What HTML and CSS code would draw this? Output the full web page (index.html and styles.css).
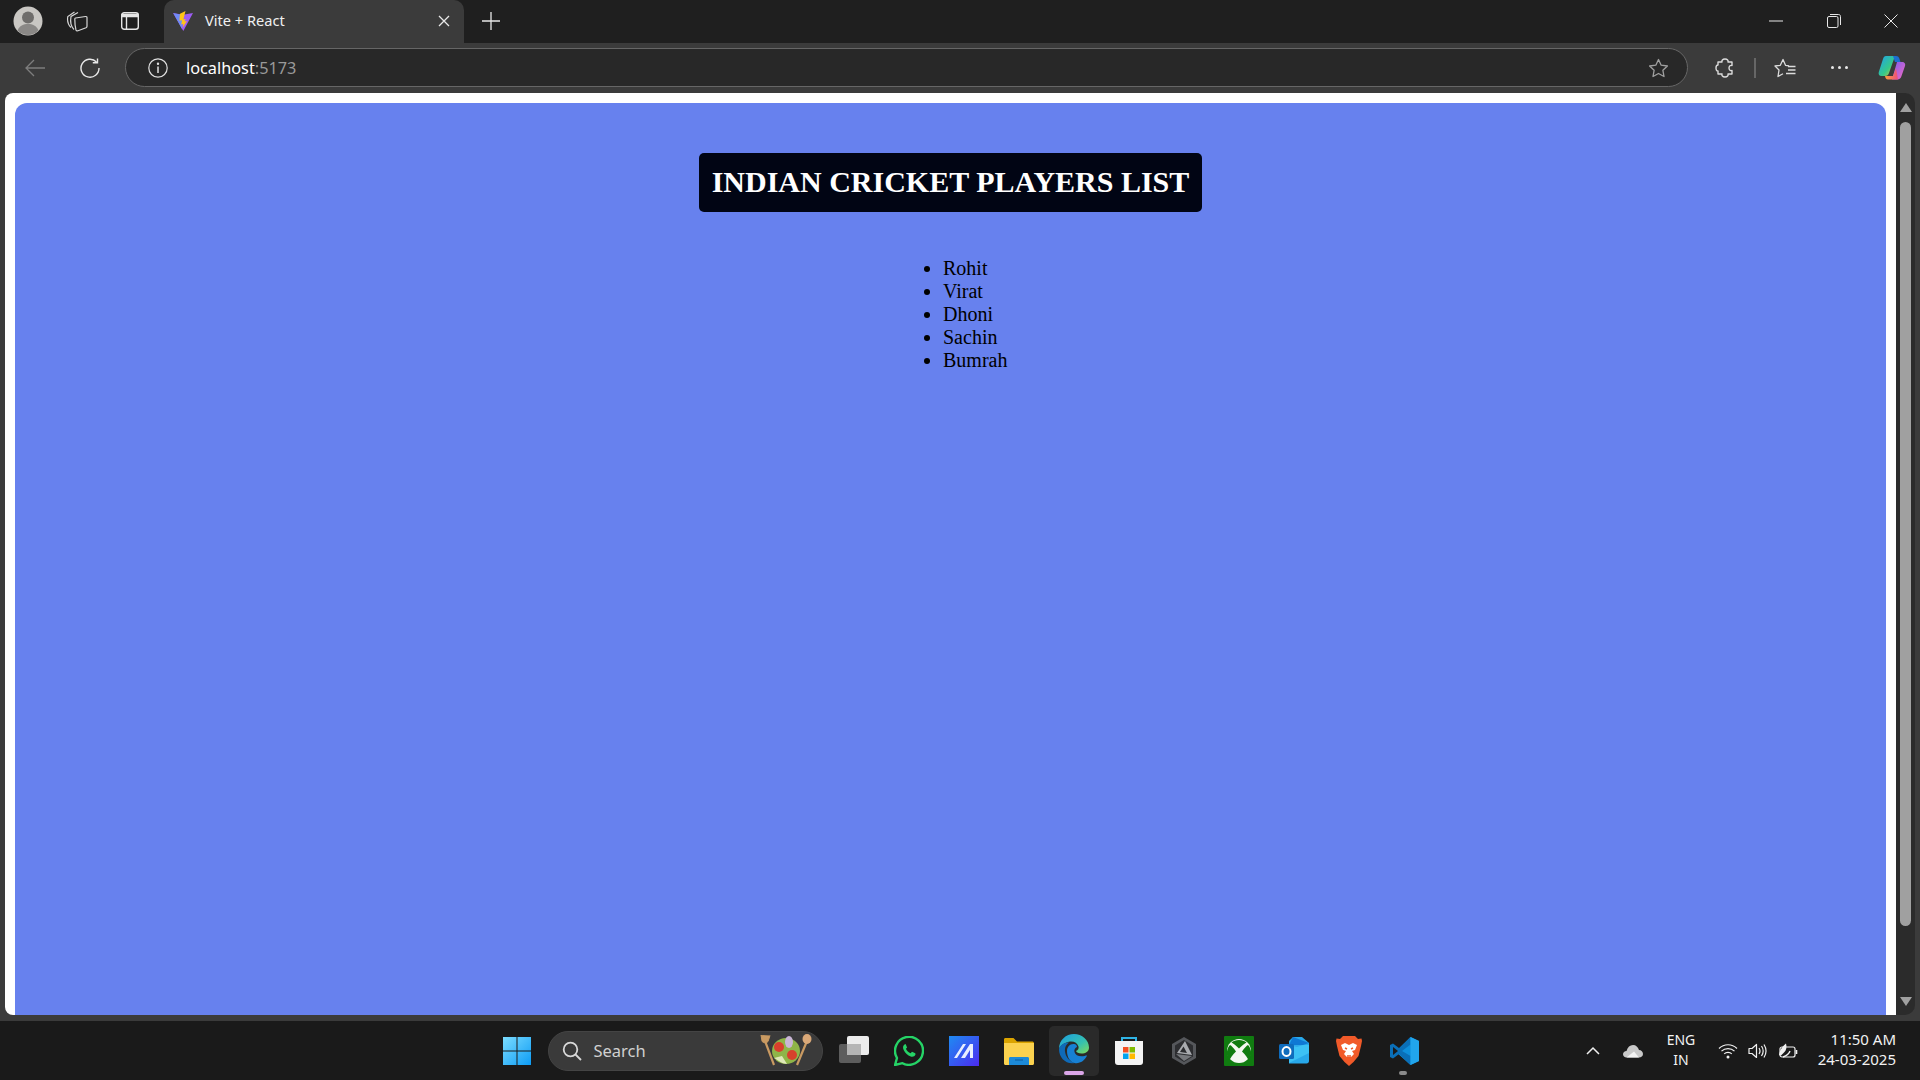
FILE: index.html
```html
<!DOCTYPE html>
<html lang="en">
<head>
  <meta charset="UTF-8" />
  <title>Vite + React</title>
  <link rel="stylesheet" href="styles.css">
</head>
<body>

  <div class="tabstrip">
    <div class="slot avatar-slot">
      <svg width="30" height="30" viewBox="0 0 30 30"><circle cx="15" cy="15" r="14.5" fill="#c9c7c3"/><circle cx="15" cy="11.5" r="6" fill="#6f6d6b"/><path d="M4.5 24.5c2-5 6-6.500 10.500-6.500s8.500 1.500 10.500 6.500A14.500 14.500 0 0 1 4.500 24.500z" fill="#8a8886"/></svg>
    </div>
    <div class="slot collections-slot">
      <svg width="22" height="22" viewBox="0 0 22 22" fill="none" stroke="#d6d6d6" stroke-width="1.200"><path d="M5 17.500C2.500 15 1 11 1.800 6.500L8.500 2"/><path d="M8 19.500C5.500 17 4 12 5 6.500L12 2.500"/><path d="M9.500 8l10-1.500c1-.1 1.500.3 1.500 1.200v8.500c0 .8-.3 1.200-1 1.500L12 20.800c-1 .3-1.700 0-2-.8-1-3.500-1.200-7.500-1.200-11 0-.5.200-.9.700-1z"/></svg>
    </div>
    <div class="slot tabview-slot">
      <svg width="20" height="20" viewBox="0 0 20 20" fill="none" stroke="#e6e6e6" stroke-width="1.400"><rect x="1.700" y="1.700" width="16.600" height="16.600" rx="2.500"/><path d="M6.500 5.500v12.800"/><path d="M2 3.500h16v2H2z" fill="#e6e6e6"/></svg>
    </div>
    <div class="tab">
      <svg class="favicon" width="22" height="22" viewBox="0 0 22 22"><path d="M1 3l10 1.800L21 3 11.300 21z" fill="#9d5cf5"/><path d="M1.500 3.300l9.500 1.700-1 14z" fill="#6f8cf6"/><path d="M13.500 1L8 3.800l-.6 7 2.600-.6-.7 4.300 2-.5-.6 3.600L15 11l-2.500.5 1.200-2.500L11.400 9.500z" fill="#ffc517"/></svg>
      <span class="tab-title">Vite + React</span>
      <svg class="tab-close" width="12" height="12" viewBox="0 0 12 12" stroke="#e8e8e8" stroke-width="1.300"><path d="M1 1l10 10M11 1L1 11"/></svg>
    </div>
    <div class="slot newtab-slot">
      <svg width="18" height="18" viewBox="0 0 18 18" stroke="#e8e8e8" stroke-width="1.300"><path d="M9 0v18M0 9h18"/></svg>
    </div>
    <div class="window-controls">
      <div class="slot win-slot"><svg width="14" height="14" viewBox="0 0 14 14" stroke="#e8e8e8" stroke-width="1"><path d="M0 7h14"/></svg></div>
      <div class="slot win-slot"><svg width="14" height="14" viewBox="0 0 14 14" fill="none" stroke="#e8e8e8" stroke-width="1"><rect x=".5" y="2.500" width="10.500" height="11" rx="1.500"/><path d="M3 .5h8.500c1.200 0 2 .8 2 2V11"/></svg></div>
      <div class="slot win-slot"><svg width="14" height="14" viewBox="0 0 14 14" stroke="#e8e8e8" stroke-width="1"><path d="M.5.5l13 13M13.500.5l-13 13"/></svg></div>
    </div>
  </div>

  <div class="toolbar">
    <div class="slot back-slot">
      <svg width="20" height="18" viewBox="0 0 20 18" fill="none" stroke="#7d7d7d" stroke-width="1.300"><path d="M20 9H1M9 1L1 9l8 8"/></svg>
    </div>
    <div class="slot reload-slot">
      <svg width="20" height="20" viewBox="0 0 20 20" fill="none" stroke="#e8e8e8" stroke-width="1.400"><path d="M16.500 4A9 9 0 1 0 19 10"/><path d="M17.500 .5v4.200h-4.700"/></svg>
    </div>
    <div class="address">
      <svg class="info" width="20" height="20" viewBox="0 0 20 20" fill="none" stroke="#e0e0e0" stroke-width="1.200"><circle cx="10" cy="10" r="9.200"/><path d="M10 8.500v6.500" stroke-width="1.500"/><circle cx="10" cy="5.800" r=".6" fill="#e0e0e0"/></svg>
      <span class="host">localhost</span><span class="port">:5173</span>
      <svg class="star" width="21" height="20" viewBox="0 0 21 20" fill="none" stroke="#a0a0a0" stroke-width="1.300"><path d="M10.500 1.500l2.700 5.700 6.200.8-4.500 4.300 1.100 6.200-5.500-3-5.500 3 1.100-6.200L1.600 8l6.200-.8z" stroke-linejoin="round"/></svg>
    </div>
    <div class="slot puzzle-slot">
      <svg width="20" height="20" viewBox="0 0 20 20" fill="none" stroke="#dcdcdc" stroke-width="1.400" stroke-linejoin="round"><path d="M7 4C6.500 2.500 7.500 1 10 1s3.500 1.500 3 3h4v3.500c-1.500-.5-3 .5-3 2.500s1.500 3 3 2.500V16h-4c.5 1.500-.5 3-3 3s-3.500-1.500-3-3H3v-3c-1.500 0-2-1.500-2-3s.5-3 2-3V4z"/></svg>
    </div>
    <div class="divider"></div>
    <div class="slot favs-slot">
      <svg width="22" height="20" viewBox="0 0 22 20" fill="none" stroke="#dcdcdc" stroke-width="1.300" stroke-linejoin="round"><path d="M15 7.800l-3.500-.5L9 1.500 6.300 7.300 1 8l4 4-1 6.500 5-2.800"/><path d="M14 8.500h7.500M14 12h7.500M12 15.500h9.500"/></svg>
    </div>
    <div class="slot dots-slot">
      <span class="dot"></span><span class="dot"></span><span class="dot"></span>
    </div>
    <div class="slot copilot-slot">
      <svg width="28" height="26" viewBox="0 0 28 26">
        <defs>
          <linearGradient id="copA" x1="0" y1="0" x2="1" y2="1"><stop offset="0" stop-color="#1fa0ef"/><stop offset=".6" stop-color="#35c98a"/><stop offset="1" stop-color="#f3c62b"/></linearGradient>
          <linearGradient id="copB" x1="0" y1="0" x2="1" y2="1"><stop offset="0" stop-color="#7a5cf0"/><stop offset="1" stop-color="#f56ac0"/></linearGradient>
          <linearGradient id="copC" x1="0" y1="0" x2="1" y2="0"><stop offset="0" stop-color="#f9a03c"/><stop offset="1" stop-color="#ee4d7c"/></linearGradient>
        </defs>
        <path d="M8 1h9l-6 17c-.6 1.800-1.800 3-4 3H3.500C1 21 .2 19 .8 17L5 4c.5-2 1.500-3 3-3z" fill="url(#copA)"/>
        <path d="M15 1h3c2 0 3 1 3.500 3l1 3H17z" fill="#1c6fd0"/>
        <path d="M19 7h5c2.500 0 3.800 2 3 4l-3.500 10c-.6 2-2 3.500-4 3.500H14z" fill="url(#copB)"/>
        <path d="M7 21h8l3-8 2 11.500H10c-2 0-2.500-1.500-3-3.500z" fill="url(#copC)"/>
      </svg>
    </div>
  </div>

  <div class="window-body">
    <div class="viewport">
      <div class="app">
        <h1 class="title">INDIAN CRICKET PLAYERS LIST</h1>
        <ul class="players">
          <li>Rohit</li>
          <li>Virat</li>
          <li>Dhoni</li>
          <li>Sachin</li>
          <li>Bumrah</li>
        </ul>
      </div>
    </div>
    <div class="scrollbar">
      <div class="arrow-up"></div>
      <div class="thumb"></div>
      <div class="arrow-down"></div>
    </div>
  </div>

  <div class="taskbar">
    <div class="task-slot">
      <svg width="30" height="30" viewBox="0 0 30 30"><defs><linearGradient id="win" x1="0" y1="0" x2="1" y2="1"><stop offset="0" stop-color="#7bdcff"/><stop offset="1" stop-color="#0d9cf5"/></linearGradient></defs><path d="M1 1h13.500v13.500H1zM15.500 1H29v13.500H15.500zM1 15.500h13.500V29H1zM15.500 15.500H29V29H15.500z" fill="url(#win)"/></svg>
    </div>
    <div class="search">
      <svg width="20" height="20" viewBox="0 0 20 20" fill="none" stroke="#d8d8d8" stroke-width="1.800"><circle cx="8.500" cy="8.500" r="6.800"/><path d="M13.500 13.500l5.500 5.500"/></svg>
      <span class="search-text">Search</span>
      <svg class="salad" width="52" height="36" viewBox="0 0 52 36">
        <path d="M5 8l9 24" stroke="#c99a62" stroke-width="2.200"/>
        <path d="M1 2l1 6c.5 2 4.500 2.500 6 .5l2-6" fill="#c99a62" stroke="#c99a62" stroke-width="1"/>
        <path d="M47 8l-10 24" stroke="#c99a62" stroke-width="2.200"/>
        <ellipse cx="47" cy="6" rx="4.500" ry="5" fill="#d9a878"/>
        <ellipse cx="26" cy="18" rx="14" ry="13" fill="#8fb548"/>
        <circle cx="19" cy="14" r="5" fill="#d8402c"/>
        <circle cx="32" cy="22" r="5" fill="#d8402c"/>
        <ellipse cx="29" cy="9" rx="4" ry="6" fill="#c9b6d6"/>
        <path d="M14 25c5 3 9 6 13 6l-5-8z" fill="#dfe8b8"/>
      </svg>
    </div>
    <div class="task-slot">
      <svg width="30" height="30" viewBox="0 0 30 30"><rect x="8" y="0" width="22" height="19" rx="2" fill="#ececec"/><rect x="0" y="8" width="22" height="19" rx="2" fill="#6a6a6a" fill-opacity=".85"/><rect x="8" y="8" width="14" height="11" fill="#b5b5b5"/></svg>
    </div>
    <div class="task-slot">
      <svg width="30" height="30" viewBox="0 0 30 30"><path d="M1 29l2-7A14 14 0 1 1 8.500 27.200z" fill="none" stroke="#25d366" stroke-width="2.400" stroke-linejoin="round"/><path d="M10.500 8.500c-1.500 1-2 3-.8 5.500 1.500 3 4 5.500 7 6.500 2 .6 4 0 4.800-2l-.2-1.200-3.300-1.600-1.400 1.600c-2-.8-3.800-2.500-4.700-4.500l1.200-1.400-1.500-3.300z" fill="#25d366"/></svg>
    </div>
    <div class="task-slot">
      <svg width="30" height="30" viewBox="0 0 30 30"><defs><linearGradient id="ms" x1="0" y1="0" x2="1" y2="1"><stop offset="0" stop-color="#1f8bf2"/><stop offset="1" stop-color="#4b2bf0"/></linearGradient></defs><rect width="30" height="30" fill="url(#ms)"/><path d="M5 22L14 8h3L8 22zM12 22l9-14h3v14h-3v-8l-5 8z" fill="#e8efff"/></svg>
    </div>
    <div class="task-slot">
      <svg width="30" height="28" viewBox="0 0 30 28"><path d="M0 2.500C0 1.500.6 1 1.500 1h8L13 4.500h15c1.200 0 2 .6 2 2V9H0z" fill="#dba400"/><path d="M0 6h30v20.500c0 .8-.6 1.500-1.500 1.500h-27C.6 28 0 27.300 0 26.500z" fill="#fbd24f"/><path d="M5 21.500c0-1 .6-1.500 1.500-1.500h17c.9 0 1.500.5 1.500 1.500V28H5z" fill="#1c8ad8"/><path d="M11 23h8" stroke="#0d5a9c" stroke-width="1"/></svg>
    </div>
    <div class="task-slot active">
      <svg width="30" height="30" viewBox="0 0 30 30"><defs><linearGradient id="edgeA" x1="0" y1="0" x2="1" y2="1"><stop offset="0" stop-color="#1b9de2"/><stop offset=".6" stop-color="#35c1b0"/><stop offset="1" stop-color="#7fdc5c"/></linearGradient></defs><path d="M15 0C23 0 30 6 30 13.500c0 4-3.500 6-7.500 6-3 0-5-1-5.500-2.500 2-1 3-2.500 2.500-4.500C18.500 9 15 7 11 7.500 5 8.500 1 12 0 15 0 6 7 0 15 0z" fill="url(#edgeA)"/><path d="M0 15C1 11 5 8.500 10 8.500c-3 2-4.500 5-4 9 .6 5 4 9.500 9.500 11.500C7 30.500 0 24 0 15z" fill="#0f6ab8"/><path d="M8 17c0-4 3-7.500 7-7 2 .2 3 1.500 3 3-2 1-3 2.500-2.500 5 .8 3.500 5 5 10 4 1.500-.3 2.500-.6 2.500-.2C25.500 27 20.500 30 15.500 29 11 28 8 23 8 17z" fill="#1780d4"/></svg>
      <span class="indicator indicator-edge"></span>
    </div>
    <div class="task-slot">
      <svg width="30" height="30" viewBox="0 0 30 30"><path d="M8 5V2h14v3" fill="none" stroke="#2fb4e6" stroke-width="2"/><path d="M1 5h28v21c0 2-1 3-3 3H4c-2 0-3-1-3-3z" fill="#f4f4f4"/><rect x="9" y="11" width="5.500" height="5.500" fill="#f25022"/><rect x="15.500" y="11" width="5.500" height="5.500" fill="#7fba00"/><rect x="9" y="17.500" width="5.500" height="5.500" fill="#00a4ef"/><rect x="15.500" y="17.500" width="5.500" height="5.500" fill="#ffb900"/></svg>
    </div>
    <div class="task-slot">
      <svg width="28" height="30" viewBox="0 0 28 30"><path d="M14 1l12 7v14l-12 7-12-7V8z" fill="#55575b"/><path d="M14 4l9 5.500v11L14 26l-9-5.500v-11z" fill="#2c2d30"/><path d="M15 5l7 14-15-2z" fill="#a9abaf"/><path d="M13.500 10.500L10 16l7 1z" fill="#2c2d30"/><path d="M6 18l16 2-8 5z" fill="#77797d"/></svg>
    </div>
    <div class="task-slot">
      <svg width="30" height="30" viewBox="0 0 30 30"><rect width="30" height="30" rx="1" fill="#107c10"/><circle cx="15" cy="15" r="12" fill="#f4f8f2"/><path d="M15 12.500C12 9.500 9.500 7.500 7.500 6.500 9 5 12 4 15 4s6 1 7.500 2.500c-2 1-4.500 3-7.500 6zM12 15.500C8.500 19 6 22.500 5.500 24.500 3.500 22 2.500 18.500 3 15.500c.4-3 1.500-5 3-6.500 1.500.6 3.500 3 6 6.500zM18 15.500c3.500 3.500 6 7 6.500 9 2-2.500 3-6 2.500-9-.4-3-1.500-5-3-6.500-1.500.6-3.500 3-6 6.500z" fill="#107c10"/></svg>
    </div>
    <div class="task-slot">
      <svg width="30" height="28" viewBox="0 0 30 28"><path d="M14 0h9l7 6v18c0 1.500-1 2.500-2.500 2.500H10V4z" fill="#28a8ea"/><path d="M14 0l16 6-12 4-8-2z" fill="#0f78d4"/><path d="M10 8h20v8l-20 10z" fill="#50d9ff" fill-opacity=".5"/><rect x="0" y="7" width="15" height="15" rx="1.500" fill="#0f6cbd"/><ellipse cx="7.500" cy="14.500" rx="4" ry="4.500" fill="none" stroke="#fff" stroke-width="2"/></svg>
    </div>
    <div class="task-slot">
      <svg width="26" height="30" viewBox="0 0 26 30"><path d="M7 0h12l3 3 3.500-.5L26 5l-1 5-2.500 10-5 6L13 30l-4.500-4-5-6L1 10 0 5l.5-2.500L4 3z" fill="#f15a29"/><path d="M13 9l4-2 4 2-2 5-3 1 2 3-3 3h-4l-3-3 2-3-3-1-2-5 4-2z" fill="#fff"/><path d="M9 12l2 1M17 12l-2 1M11 20h4" stroke="#f15a29" stroke-width="1.400"/></svg>
    </div>
    <div class="task-slot">
      <svg width="30" height="30" viewBox="0 0 30 30"><path d="M21.500 1L30 5v20l-8.500 4L7 16z" fill="#0e8fdc"/><path d="M21.500 1L10 12l-6-4.500L1 9v12l3 1.500 6-4.500 11.500 11V20L13 15l8.500-6.500z" fill="#0a6fb8"/><path d="M21.500 1L30 5v20l-8.500 4z" fill="#21a5ec"/><path d="M4 11l5 4-5 4z" fill="#1a1a1a"/></svg>
      <span class="indicator indicator-code"></span>
    </div>
    <div class="tray">
      <div class="tray-slot chevron">
        <svg width="14" height="9" viewBox="0 0 14 9" fill="none" stroke="#f0f0f0" stroke-width="1.500"><path d="M1 8l6-6 6 6"/></svg>
      </div>
      <div class="tray-slot chevron">
        <svg width="20" height="14" viewBox="0 0 20 14"><path d="M3.500 13.500C1.500 13.500 0 12 0 10.300 0 8.500 1.500 7 3.500 7 4.500 3 7 1 10 1c3 0 5 2 6 5 2.300 0 4 1.700 4 4s-1.700 3.500-4 3.500z" fill="#c9c9c9"/><path d="M3.500 13.500L11 7.500l5 6z" fill="#f2f2f2"/></svg>
      </div>
      <div class="lang">ENG<br>IN</div>
      <div class="tray-icons">
        <div class="tray-icon">
          <svg width="20" height="16" viewBox="0 0 20 16" fill="none" stroke="#f0f0f0" stroke-width="1.200"><path d="M1 5.500c5-5 13-5 18 0M3.500 8.200c3.500-3.500 9.500-3.500 13 0M6.200 10.800c2-2 5.600-2 7.600 0"/><circle cx="10" cy="14" r="1.500" fill="#f0f0f0" stroke="none"/></svg>
        </div>
        <div class="tray-icon">
          <svg width="20" height="16" viewBox="0 0 20 16" fill="none" stroke="#f0f0f0" stroke-width="1.200"><path d="M1 5.500h3L8.500 1.500v13L4 10.500H1z" stroke-linejoin="round"/><path d="M11 5c1.200 1.800 1.200 4.200 0 6M13.500 3c2 3 2 7 0 10M16 1.500c2.500 4 2.500 9 0 13"/></svg>
        </div>
        <div class="tray-icon">
          <svg width="20" height="16" viewBox="0 0 20 16" fill="none" stroke="#f0f0f0" stroke-width="1.200"><rect x="2" y="4" width="15" height="10" rx="2"/><path d="M18.500 7v4" stroke-width="1.600"/><path d="M1 12C2 6 5 3 8 .5c1 3 .5 7-2 9L3 12.500z" fill="#f0f0f0" stroke="none"/><path d="M5 14c3-1 6-3 7-6" stroke-width="1.400"/></svg>
        </div>
      </div>
      <div class="clock">11:50 AM<br>24-03-2025</div>
    </div>
  </div>

</body>
</html>
```

FILE: styles.css
```css
html, body {
  margin: 0;
  padding: 0;
  height: 100%;
  overflow: hidden;
  background: #3b3b3b;
  font-family: "Noto Sans", sans-serif;
}
body {
  display: flex;
  flex-direction: column;
}
.slot {
  display: flex;
  align-items: center;
  justify-content: center;
  flex-shrink: 0;
}

/* tab strip */
.tabstrip {
  display: flex;
  height: 43px;
  padding-left: 6px;
  background: #1f1f1f;
}
.tabstrip .slot { padding-bottom: 2px; }
.avatar-slot { width: 44px; }
.collections-slot { width: 54px; }
.tabview-slot { width: 50px; margin-left: 1px; }
.tab {
  display: flex;
  align-items: center;
  width: 300px;
  box-sizing: border-box;
  margin-left: 9px;
  padding: 0 14px 2px 8px;
  background: #3b3b3b;
  border-radius: 10px 10px 0 0;
  color: #f0f0f0;
  font-size: 14.6px;
}
.tab-title {
  flex: 1;
  margin: 0 0 2px 11px;
}
.newtab-slot { width: 54px; }
.window-controls {
  display: flex;
  margin-left: auto;
}
.win-slot { width: 57.5px; }

/* toolbar */
.toolbar {
  display: flex;
  align-items: center;
  height: 50px;
  box-sizing: border-box;
  padding: 0 0 1px 10px;
  background: #3b3b3b;
}
.back-slot { width: 50px; }
.reload-slot { width: 60px; }
.address {
  display: flex;
  align-items: center;
  width: 1563px;
  height: 39px;
  box-sizing: border-box;
  margin-left: 5px;
  padding: 0 18px 0 22px;
  background: #282828;
  border: 1px solid #666;
  border-radius: 20px;
  font-size: 16.3px;
}
.info { margin-right: 18px; }
.host { color: #fff; }
.port { color: #999; }
.star { margin-left: auto; }
.puzzle-slot {
  width: 56px;
  margin-left: 9px;
}
.divider {
  width: 2px;
  height: 20px;
  margin: 0 2px 0 1px;
  background: #666;
}
.favs-slot { width: 54px; }
.dots-slot {
  width: 56px;
  gap: 4px;
  margin-left: -1px;
}
.dot {
  width: 3px;
  height: 3px;
  border-radius: 50%;
  background: #e8e8e8;
}
.copilot-slot { width: 50px; }

/* page */
.window-body {
  flex: 1;
  display: flex;
  min-height: 0;
  padding: 0 5px 6px 5px;
}
.viewport {
  flex: 1;
  background: #fff;
  border-radius: 8px 0 0 8px;
  padding: 10px 10px 0 10px;
  overflow: hidden;
}
.app {
  height: 100%;
  background: #6781ee;
  border-radius: 12px 12px 0 0;
  overflow: hidden;
}
.title {
  width: fit-content;
  margin: 50px auto 0;
  padding: 11px 13px 13px;
  background: #010514;
  border-radius: 5px;
  color: #fff;
  font-family: "Liberation Serif", serif;
  font-size: 30px;
  line-height: 35px;
}
.players {
  width: 55px;
  margin: 45px auto 0;
  padding-left: 40px;
  color: #000;
  font-family: "Liberation Serif", serif;
  font-size: 20px;
  line-height: 23px;
  white-space: nowrap;
}

/* scrollbar */
.scrollbar {
  display: flex;
  flex-direction: column;
  align-items: center;
  width: 19px;
  padding-top: 10px;
  box-sizing: border-box;
  background: #2b2b2b;
  border-radius: 0 10px 10px 0;
}
.arrow-up, .arrow-down {
  width: 0;
  height: 0;
  border-left: 6px solid transparent;
  border-right: 6px solid transparent;
}
.arrow-up { border-bottom: 9px solid #a0a0a0; }
.arrow-down {
  margin-top: 71px;
  border-top: 9px solid #a0a0a0;
}
.thumb {
  width: 11px;
  height: 804px;
  margin-top: 10px;
  background: #a0a0a0;
  border-radius: 6px;
}

/* taskbar */
.taskbar {
  display: flex;
  align-items: center;
  height: 59px;
  padding-left: 489px;
  background: #1a1a1a;
  color: #f2f2f2;
}
.task-slot {
  position: relative;
  display: flex;
  align-items: center;
  justify-content: center;
  width: 55px;
  height: 50px;
  flex-shrink: 0;
}
.active::before {
  content: "";
  position: absolute;
  left: 3px;
  right: 2px;
  top: 0;
  bottom: 0;
  background: #2a2a2a;
  border-radius: 5px;
}
.active svg {
  position: relative;
  margin-top: -3px;
}
.indicator {
  position: absolute;
  height: 4px;
  border-radius: 2px;
}
.indicator-edge {
  left: 18px;
  width: 20px;
  bottom: 1px;
  background: #dba6e8;
}
.indicator-code {
  left: 23px;
  width: 8px;
  bottom: 1px;
  background: #8a8a8a;
}
.search {
  display: flex;
  align-items: center;
  width: 275px;
  height: 40px;
  box-sizing: border-box;
  margin: 0 3.5px;
  padding: 0 10px 0 13px;
  background: #3a3a3a;
  border: 1px solid #444;
  border-radius: 20px;
  font-size: 16.5px;
  color: #d0d0d0;
}
.search-text { margin-left: 12px; }
.salad { margin-left: auto; }
.tray {
  display: flex;
  align-items: center;
  margin-left: auto;
  padding-right: 24px;
}
.tray-slot {
  display: flex;
  align-items: center;
  justify-content: center;
}
.chevron { width: 40px; }
.lang {
  width: 56px;
  padding-bottom: 1px;
  text-align: center;
  font-size: 14px;
  line-height: 20px;
}
.tray-icons {
  display: flex;
  margin-left: 4px;
}
.tray-icon {
  display: flex;
  justify-content: center;
  width: 30px;
}
.clock {
  width: 93px;
  padding-bottom: 3px;
  text-align: right;
  font-size: 15px;
  line-height: 20px;
  white-space: nowrap;
}
```
